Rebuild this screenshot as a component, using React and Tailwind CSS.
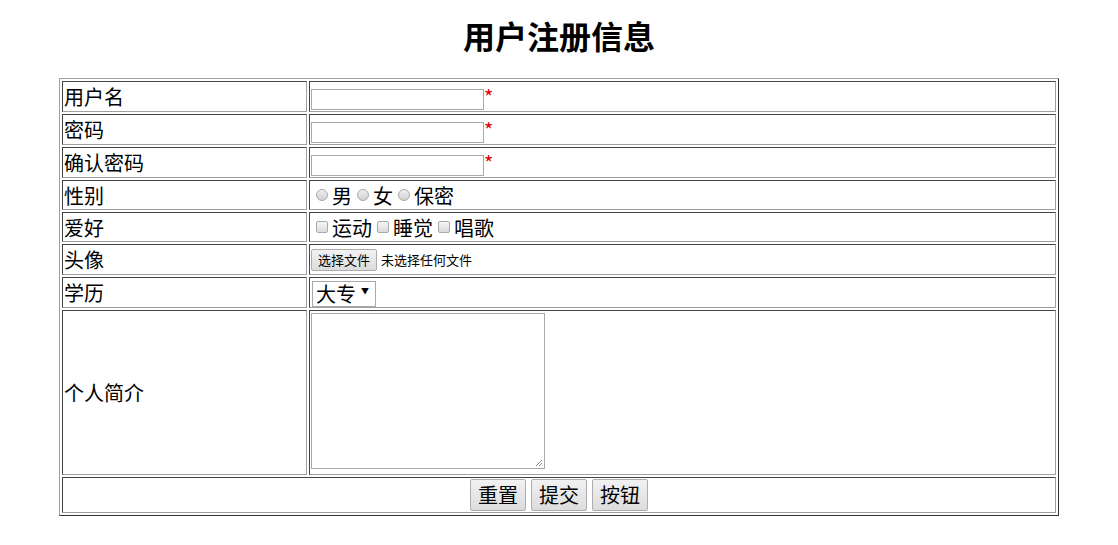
import React from 'react'

const font = { fontFamily: '"Microsoft YaHei", "Noto Sans CJK SC", sans-serif' }

const cellBorder = 'border border-t-[#444] border-l-[#444] border-r-[#a0a0a0] border-b-[#a0a0a0] p-0 align-middle'

function Radio({ label }) {
  return (
    <>
      <span className="ml-[5px] mr-[4px] inline-block h-[12px] w-[12px] shrink-0 rounded-full border border-[#a9a9a9] bg-gradient-to-b from-[#f0f0f0] to-[#d0d0d0]" />
      <span>{label}</span>
    </>
  )
}

function Check({ label }) {
  return (
    <>
      <span className="ml-[5px] mr-[4px] inline-block h-[12px] w-[12px] shrink-0 rounded-[2px] border border-[#a9a9a9] bg-gradient-to-b from-[#f6f6f6] to-[#dadada]" />
      <span>{label}</span>
    </>
  )
}

function Row({ label, children, h = 'h-[29px]' }) {
  return (
    <tr>
      <td className={`w-[245px] ${cellBorder}`}>
        <div className={`flex ${h} items-center px-px`}>{label}</div>
      </td>
      <td className={cellBorder}>
        <div className={`flex ${h} items-center px-px`}>{children}</div>
      </td>
    </tr>
  )
}

function TextInput() {
  return (
    <div className="flex h-full items-start pt-[7px]">
      <span className="inline-block h-[21px] w-[173px] border border-[#a9a9a9] bg-white" />
      <span className="mt-[-2px] text-[20px] leading-[20px] text-[#e00000]">*</span>
    </div>
  )
}

function Btn({ children }) {
  return (
    <span className="inline-flex h-[32px] w-[56px] items-center justify-center rounded-[2px] border border-[#adadad] bg-gradient-to-b from-[#f2f2f2] to-[#dcdcdc] text-[20px] leading-none">
      {children}
    </span>
  )
}

export default function App() {
  return (
    <div className="min-h-screen bg-white text-black" style={font}>
      <h1 className="pt-[12px] mb-[20px] text-center text-[32px] font-bold leading-[46px]">用户注册信息</h1>
      <table className="mx-auto w-[1000px] border-separate border-spacing-[2px] border border-t-[#a0a0a0] border-l-[#a0a0a0] border-r-[#333] border-b-[#333] text-[20px] leading-[29px]">
        <tbody>
          <Row label="用户名"><TextInput /></Row>
          <Row label="密码"><TextInput /></Row>
          <Row label="确认密码"><TextInput /></Row>
          <Row label="性别" h="h-[28px]">
            <Radio label="男" />
            <Radio label="女" />
            <Radio label="保密" />
          </Row>
          <Row label="爱好" h="h-[28px]">
            <Check label="运动" />
            <Check label="睡觉" />
            <Check label="唱歌" />
          </Row>
          <Row label="头像">
            <span className="inline-flex items-center text-[13px] leading-none">
              <span className="inline-flex h-[22px] items-center rounded-[2px] border border-[#adadad] bg-gradient-to-b from-[#f2f2f2] to-[#dcdcdc] px-[6px]">选择文件</span>
              <span className="ml-[4px]">未选择任何文件</span>
            </span>
          </Row>
          <Row label="学历">
            <span className="ml-[1px] mt-[3px] inline-flex h-[26px] w-[64px] items-center border border-[#a9a9a9] pl-[3px] text-[20px] leading-none">
              大专
              <span className="ml-[5px] mb-[6px] text-[8px]">▼</span>
            </span>
          </Row>
          <tr>
            <td className={cellBorder}>
              <div className="flex h-[163px] items-center px-px">个人简介</div>
            </td>
            <td className={cellBorder}>
              <div className="h-[163px] px-px pt-[2px]">
                <span className="relative block h-[156px] w-[234px] border border-[#a9a9a9]">
                  <svg className="absolute bottom-[1px] right-[1px]" width="9" height="9" viewBox="0 0 9 9">
                    <path d="M8 2 L2 8 M8 5 L5 8" stroke="#888" strokeWidth="1" />
                  </svg>
                </span>
              </div>
            </td>
          </tr>
          <tr>
            <td colSpan={2} className={cellBorder}>
              <div className="flex h-[34px] items-center justify-center gap-[5px]">
                <Btn>重置</Btn>
                <Btn>提交</Btn>
                <Btn>按钮</Btn>
              </div>
            </td>
          </tr>
        </tbody>
      </table>
    </div>
  )
}
